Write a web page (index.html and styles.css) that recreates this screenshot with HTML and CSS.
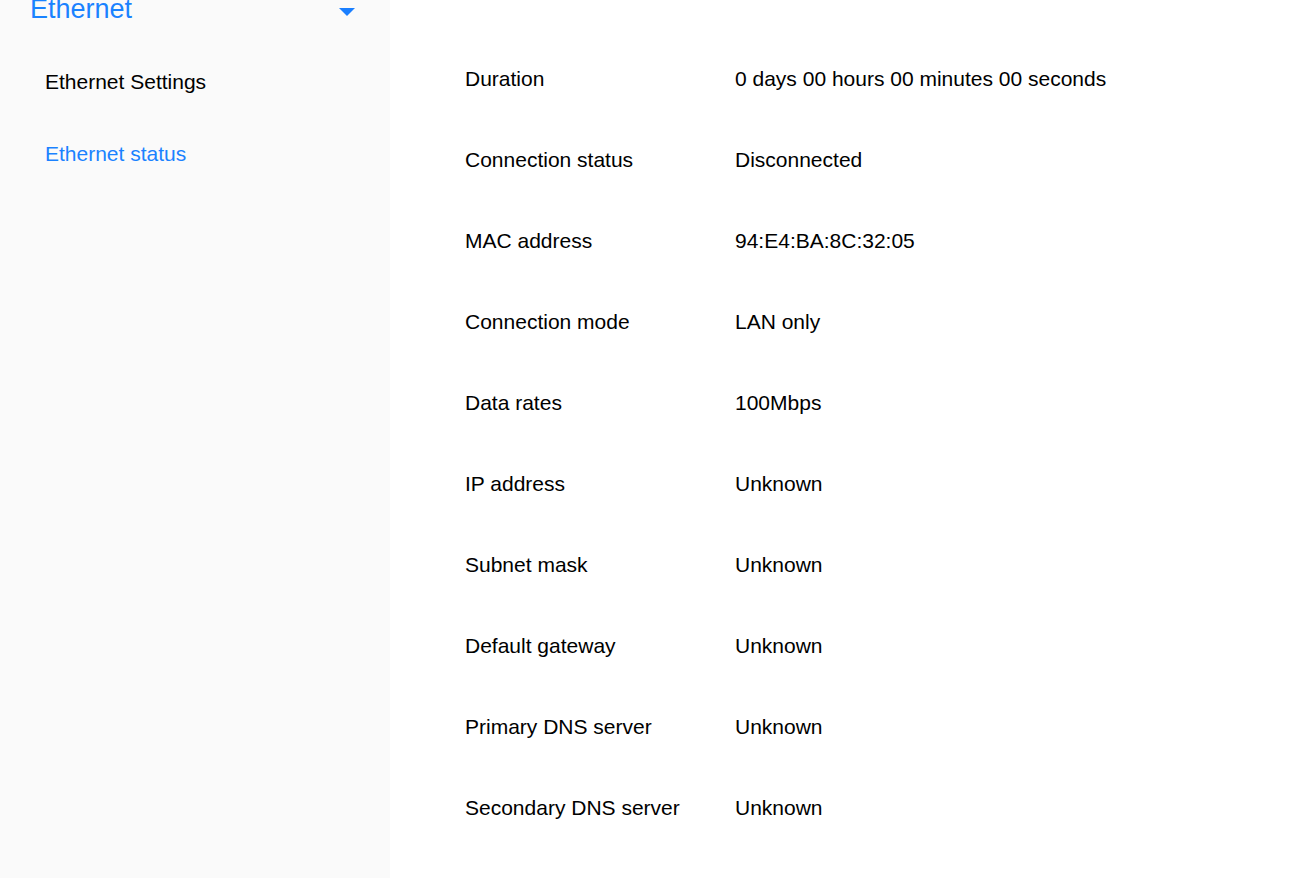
FILE: index.html
```html
<!DOCTYPE html>
<html>
<head>
<meta charset="utf-8">
<link rel="stylesheet" href="styles.css">
</head>
<body>
<div class="page">
  <aside class="sidebar">
    <div class="group-head">
      <span class="group-title">Ethernet</span>
      <svg class="caret" width="18" height="10" viewBox="0 0 18 10"><path d="M1 1 L17 1 L9 9 Z" fill="#1a7fff"/></svg>
    </div>
    <ul class="menu">
      <li class="menu-item">Ethernet Settings</li>
      <li class="menu-item active">Ethernet status</li>
    </ul>
  </aside>
  <main class="content">
    <div class="row"><span class="label">Duration</span><span class="value">0 days 00 hours 00 minutes 00 seconds</span></div>
    <div class="row"><span class="label">Connection status</span><span class="value">Disconnected</span></div>
    <div class="row"><span class="label">MAC address</span><span class="value">94:E4:BA:8C:32:05</span></div>
    <div class="row"><span class="label">Connection mode</span><span class="value">LAN only</span></div>
    <div class="row"><span class="label">Data rates</span><span class="value">100Mbps</span></div>
    <div class="row"><span class="label">IP address</span><span class="value">Unknown</span></div>
    <div class="row"><span class="label">Subnet mask</span><span class="value">Unknown</span></div>
    <div class="row"><span class="label">Default gateway</span><span class="value">Unknown</span></div>
    <div class="row"><span class="label">Primary DNS server</span><span class="value">Unknown</span></div>
    <div class="row"><span class="label">Secondary DNS server</span><span class="value">Unknown</span></div>
  </main>
</div>
</body>
</html>
```
FILE: styles.css
```css
html, body {
  margin: 0;
  padding: 0;
  height: 100%;
  background: #ffffff;
  font-family: "Liberation Sans", Arial, sans-serif;
  color: #000;
  overflow: hidden;
}
.page {
  display: flex;
  height: 878px;
}
.sidebar {
  width: 390px;
  flex: none;
  background: #fafafa;
}
.group-head {
  display: flex;
  align-items: center;
  justify-content: space-between;
  margin-top: -7px;
  padding: 0 34px 0 30px;
  height: 32px;
}
.group-title {
  font-size: 27px;
  color: #1a82ff;
  line-height: 32px;
}
.caret {
  display: block;
  margin-top: 6px;
}
.menu {
  list-style: none;
  margin: 0;
  padding: 45px 0 0 45px;
}
.menu-item {
  font-size: 21px;
  height: 72px;
  line-height: 24px;
}
.menu-item.active {
  color: #1a82ff;
}
.content {
  flex: 1;
  padding: 38px 0 0 75px;
}
.row {
  display: flex;
  align-items: center;
  height: 81px;
  font-size: 21px;
}
.label {
  width: 270px;
  flex: none;
}
```
